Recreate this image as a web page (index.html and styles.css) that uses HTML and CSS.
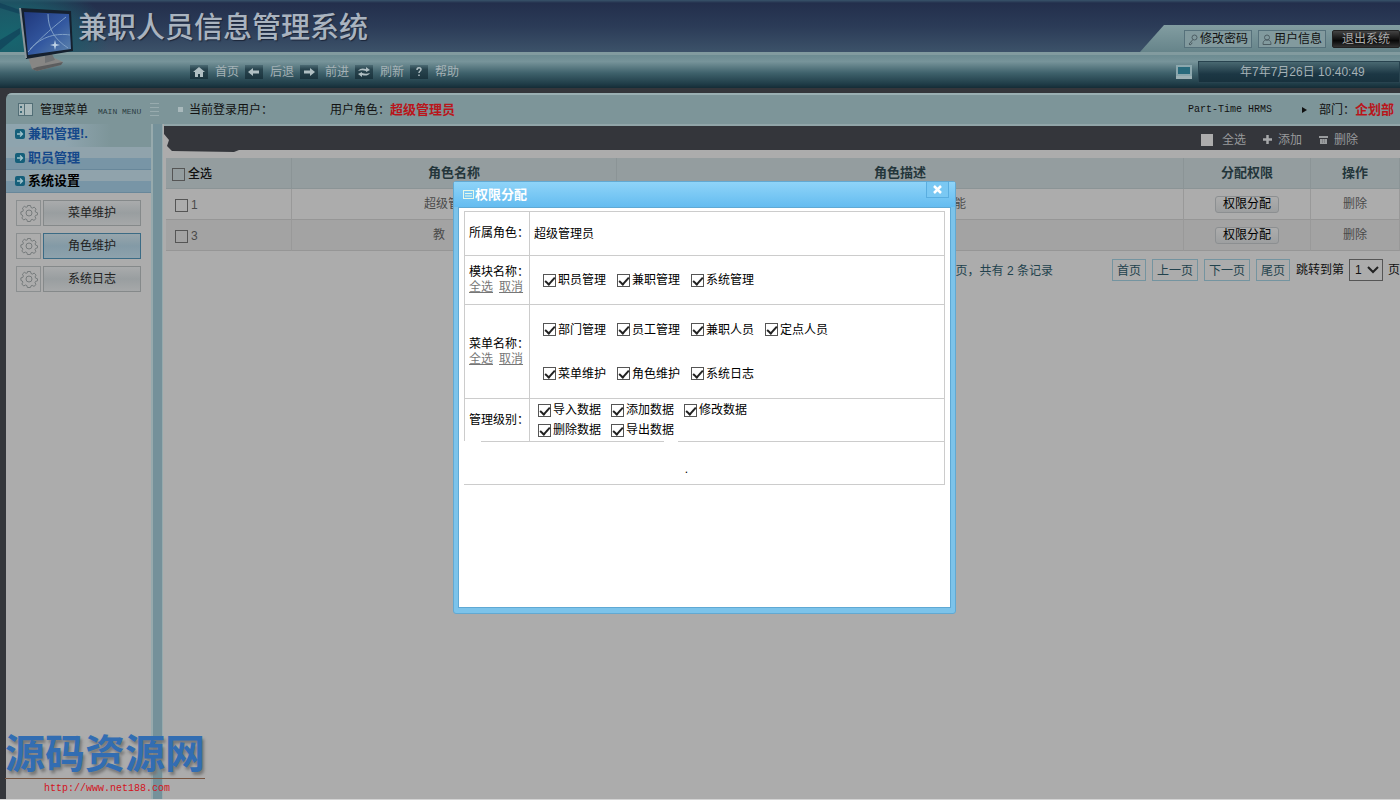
FILE: index.html
```html
<!DOCTYPE html>
<html lang="zh-CN">
<head>
<meta charset="utf-8">
<title>兼职人员信息管理系统</title>
<link rel="stylesheet" href="styles.css">
</head>
<body>
<svg class="defs" width="0" height="0" aria-hidden="true">
  <defs>
    <linearGradient id="screen" x1="0" y1="0" x2="1" y2="1"><stop offset="0" stop-color="#20387c"/><stop offset=".55" stop-color="#3358a0"/><stop offset="1" stop-color="#5f86ad"/></linearGradient>
    <linearGradient id="tile" x1="0" y1="0" x2="0" y2="1"><stop offset="0" stop-color="#4c6b74"/><stop offset=".3" stop-color="#29454f"/><stop offset="1" stop-color="#1b343e"/></linearGradient>
  </defs>
  <symbol id="gear" viewBox="0 0 18 18"><path d="M7.5 1.5h3l.5 2 1.4.6 1.8-1 1.9 2-1 1.8.5 1.2 1.9.7v2l-1.9.6-.6 1.3 1 1.8-2 1.9-1.8-1-1.2.5-.6 1.6h-3l-.5-1.9-1.4-.6-1.8 1-1.9-2 1-1.7-.5-1.3-1.4-.6V7.900l1.900-.5.600-1.400-1-1.800 1.900-1.900 1.800 1 1.300-.500z" fill="none" stroke="#767b7c"/><circle cx="9" cy="9" r="3" fill="none" stroke="#767b7c"/></symbol>
  <symbol id="bullet" viewBox="0 0 10 10"><rect width="10" height="10" rx="2" fill="#155f7a"/><path d="M2 5h5M5 2.500L7.500 5 5 7.500" fill="none" stroke="#9fc3cc" stroke-width="1.300"/></symbol>
</svg>

<header class="header">
  <div class="banner">
    <svg class="logo" width="76" height="76" viewBox="0 0 76 76" aria-hidden="true">
      <path d="M0 3l20 7v4L0 8zM0 40l20-12v6L0 50z" fill="#0f3a55" opacity=".6"/>
      <path d="M28 57l22-1 13 6-2 3-24 6-5-2z" fill="#878684"/><path d="M32 69l5 2 24-6 2-3-26 5z" fill="#5c5d5e"/>
      <path d="M45 52h6l4 8-10 3z" fill="#6f7274"/>
      <path d="M20 8l51 3 2 40-47 8z" fill="#15202e"/><path d="M19 8l2 0 6 50-2 0z" fill="#8b979d"/>
      <path d="M24 12l45 2 2 35-43 6z" fill="url(#screen)"/>
      <path d="M48 14c0 14 6 25 20 34M66 17c-9 7-25 20-38 35M30 49c12-13 27-16 40-14" fill="none" stroke="#7f9fc6" stroke-width="1"/>
      <path d="M55 40l1 4 4 1-4 1-1 4-1-4-4-1 4-1z" fill="#c0d4e6"/>
    </svg>
    <h1 class="title">兼职人员信息管理系统</h1>
    <div class="account">
      <button class="account-button"><svg width="10" height="12" viewBox="0 0 10 12"><circle cx="6.500" cy="3.500" r="2.500" fill="none" stroke="#4d5d63"/><path d="M5 5.500L1 10l1 1 1.500-1 .5-1.500" fill="none" stroke="#4d5d63"/></svg>修改密码</button>
      <button class="account-button"><svg width="10" height="12" viewBox="0 0 10 12"><circle cx="5" cy="3.500" r="2.500" fill="none" stroke="#4d5d63"/><path d="M1 10.500c0-3 1-4 2.500-4.500h3C8 6.500 9 7.500 9 10.500z" fill="none" stroke="#4d5d63"/></svg>用户信息</button>
      <button class="account-button exit">退出系统</button>
    </div>
  </div>
  <div class="toolbar">
    <nav class="nav">
      <a href="#"><svg width="18" height="14" viewBox="0 0 18 14"><rect width="18" height="14" fill="url(#tile)"/><path d="M9 2l6 5h-2v5h-3V9H8v3H5V7H3z" fill="#b0bfc3"/></svg>首页</a>
      <a href="#"><svg width="18" height="14" viewBox="0 0 18 14"><rect width="18" height="14" fill="url(#tile)"/><path d="M3 7l5-4v2.500h6v3H8V11z" fill="#b0bfc3"/></svg>后退</a>
      <a href="#"><svg width="18" height="14" viewBox="0 0 18 14"><rect width="18" height="14" fill="url(#tile)"/><path d="M15 7l-5-4v2.500H4v3h6V11z" fill="#b0bfc3"/></svg>前进</a>
      <a href="#"><svg width="18" height="14" viewBox="0 0 18 14"><rect width="18" height="14" fill="url(#tile)"/><path d="M3 6c2-3 5-3 8-2V2l4 3-4 2V6C8 5 6 5 3 6zM15 8c-2 3-5 3-8 2v2L3 9l4-2v1c3 1 5 1 8 0z" fill="#b0bfc3"/></svg>刷新</a>
      <a href="#"><svg width="18" height="14" viewBox="0 0 18 14"><rect width="18" height="14" fill="url(#tile)"/><path d="M7 5c0-3 4-3 4-.5C11 6 9 6 9 8M9 9.500v1.500" fill="none" stroke="#b0bfc3" stroke-width="1.500"/></svg>帮助</a>
    </nav>
    <div class="clock-area">
      <svg width="16" height="14" viewBox="0 0 16 14" aria-hidden="true"><rect x="1" y="1" width="14" height="9" fill="#286a7c" stroke="#8ba7ad" stroke-width="2"/><path d="M0 11h16v3H0z" fill="#9db1b5"/></svg>
      <time class="clock">年7年7月26日 10:40:49</time>
    </div>
  </div>
</header>

<div class="shell">
  <div class="infobar">
    <div class="menu-heading">
      <svg width="15" height="13" viewBox="0 0 15 13" aria-hidden="true"><rect x=".5" y=".5" width="14" height="12" fill="#a9b9bb" stroke="#526e76"/><path d="M6.500 1v11" stroke="#526e76"/><path d="M2 3h2v2H2zM2 8h2v2H2z" fill="#406b79"/></svg>
      <span>管理菜单</span><small>MAIN MENU</small>
      <i class="grip"></i>
    </div>
    <div class="info-user"><i class="dot"></i><span>当前登录用户：</span></div>
    <div class="info-role">用户角色：<strong>超级管理员</strong></div>
    <div class="info-dept"><span class="mono">Part-Time HRMS</span><i class="play"></i><span>部门：<strong>企划部</strong></span></div>
  </div>

  <div class="columns">
    <aside class="sidebar">
      <ul class="groups">
        <li class="group faded"><svg width="10" height="10"><use href="#bullet"/></svg><a href="#">兼职管理!.</a></li>
        <li class="group"><svg width="10" height="10"><use href="#bullet"/></svg><a href="#">职员管理</a></li>
        <li class="group open"><svg width="10" height="10"><use href="#bullet"/></svg><a href="#">系统设置</a></li>
      </ul>
      <div class="entries">
        <div class="entry"><span class="gear"><svg width="18" height="18"><use href="#gear"/></svg></span><button>菜单维护</button></div>
        <div class="entry"><span class="gear"><svg width="18" height="18"><use href="#gear"/></svg></span><button class="active">角色维护</button></div>
        <div class="entry"><span class="gear"><svg width="18" height="18"><use href="#gear"/></svg></span><button>系统日志</button></div>
      </div>
    </aside>
    <div class="splitter"></div>
    <main class="main">
      <div class="actions">
        <label><input type="checkbox" class="plain">全选</label>
        <a href="#"><svg width="9" height="9" viewBox="0 0 9 9"><path d="M4.500 0v9M0 4.500h9" stroke="#a6a8aa" stroke-width="2.500"/></svg>添加</a>
        <a href="#"><svg width="9" height="9" viewBox="0 0 9 9"><path d="M0 1h9v2H0zM1 4h7v5H1z" fill="#999c9e"/><path d="M3.500 4v4M5.500 4v4" stroke="#6a6c70" stroke-width=".5"/></svg>删除</a>
      </div>
      <table class="grid">
        <colgroup><col class="c-pick"><col class="c-name"><col><col class="c-grant"><col class="c-op"></colgroup>
        <thead><tr><th class="pick"><label><input type="checkbox" class="box">全选</label></th><th>角色名称</th><th>角色描述</th><th>分配权限</th><th>操作</th></tr></thead>
        <tbody>
          <tr><td class="pick"><label><input type="checkbox" class="box">1</label></td><td>超级管理员</td><td class="desc">能</td><td><button class="grant">权限分配</button></td><td><a href="#">删除</a></td></tr>
          <tr class="alt"><td class="pick"><label><input type="checkbox" class="box">3</label></td><td class="short">教</td><td></td><td><button class="grant">权限分配</button></td><td><a href="#">删除</a></td></tr>
        </tbody>
      </table>
      <div class="pager">
        <span class="total">页，共有 2 条记录</span>
        <a href="#">首页</a><a href="#">上一页</a><a href="#">下一页</a><a href="#">尾页</a>
        <label class="jump">跳转到第 <span class="select"><select><option>1</option></select><svg width="12" height="8" viewBox="0 0 12 8"><path d="M1 1l5 5 5-5" fill="none" stroke="#222" stroke-width="2"/></svg></span> 页</label>
      </div>
    </main>
  </div>
</div>

<section class="dialog" role="dialog" aria-labelledby="dialog-title">
  <header class="dialog-head">
    <svg width="11" height="9" viewBox="0 0 11 9" aria-hidden="true"><rect x=".5" y=".5" width="10" height="8" fill="none" stroke="#e6f8e8"/><path d="M2 3.500h7M2 6h7" stroke="#e6f8e8"/></svg>
    <h2 id="dialog-title">权限分配</h2>
    <button class="close" aria-label="关闭"><svg width="9" height="9" viewBox="0 0 9 9"><path d="M1 1l7 7M8 1L1 8" stroke="#fff" stroke-width="2.500"/></svg></button>
  </header>
  <div class="dialog-body">
    <table class="form">
      <tr class="r-role"><th>所属角色：</th><td>超级管理员</td></tr>
      <tr class="r-module"><th>模块名称：<div class="links"><a href="#">全选</a><a href="#">取消</a></div></th>
        <td><div class="checks">
          <label><input type="checkbox" class="box" checked>职员管理</label><label><input type="checkbox" class="box" checked>兼职管理</label><label><input type="checkbox" class="box" checked>系统管理</label></div></td></tr>
      <tr class="r-menu"><th>菜单名称：<div class="links"><a href="#">全选</a><a href="#">取消</a></div></th>
        <td><div class="checks">
          <label><input type="checkbox" class="box" checked>部门管理</label><label><input type="checkbox" class="box" checked>员工管理</label><label><input type="checkbox" class="box" checked>兼职人员</label><label><input type="checkbox" class="box" checked>定点人员</label></div>
          <div class="checks">
          <label><input type="checkbox" class="box" checked>菜单维护</label><label><input type="checkbox" class="box" checked>角色维护</label><label><input type="checkbox" class="box" checked>系统日志</label></div></td></tr>
      <tr class="r-level"><th>管理级别：</th>
        <td><div class="checks">
          <label><input type="checkbox" class="box" checked>导入数据</label><label><input type="checkbox" class="box" checked>添加数据</label><label><input type="checkbox" class="box" checked>修改数据</label></div>
          <div class="checks">
          <label><input type="checkbox" class="box" checked>删除数据</label><label><input type="checkbox" class="box" checked>导出数据</label></div></td></tr>
      <tr class="r-last"><td colspan="2">.</td></tr>
    </table>
  </div>
</section>

<div class="watermark"><div class="mark-name">源码资源网</div><div class="mark-url">http://www.net188.com</div></div>
</body>
</html>
```
FILE: styles.css
```css
* { box-sizing: border-box; }
body {
  margin: 0;
  min-height: 100vh;
  display: flex;
  flex-direction: column;
  position: relative;
  background: #34363b;
  border-bottom: 1px solid #d4d4d4;
  font: 12px/16px "Liberation Sans", "Noto Sans CJK SC", sans-serif;
  color: #111;
  overflow: hidden;
}
a { color: inherit; text-decoration: none; }
button, input, select { font: inherit; color: inherit; margin: 0; }
svg { flex: none; }
h1, h2, ul { margin: 0; padding: 0; }
.defs { position: absolute; }
.mono, .mark-url { font-family: "Liberation Mono", "Noto Sans CJK SC", monospace; font-size: 10px; }

/* header */
.banner {
  display: flex;
  height: 52px;
  background:
    radial-gradient(ellipse 100px 60px at 10px 38px, #17656f 0%, #1c5967 50%, transparent 100%),
    linear-gradient(#38536a 0, #232f4c 3px, #2b3b57 50%, #3c5269 100%);
}
.logo { margin-right: 2px; z-index: 1; }
.title { font-size: 29px; line-height: 56px; font-weight: 500; color: #a9b3bf; text-shadow: 1px 1px 1px #1b2538; }
.account {
  margin: 25px 0 0 auto;
  padding: 5px 0 0 44px;
  display: flex;
  gap: 6px;
  align-items: flex-start;
  background: linear-gradient(#829da1, #66848a);
  clip-path: polygon(24px 0, 100% 0, 100% 100%, 0 100%);
}
.account-button {
  width: 68px;
  height: 18px;
  padding: 1px 2px 0;
  display: flex;
  align-items: center;
  justify-content: center;
  gap: 2px;
  border: 1px solid #56717b;
  background: #829a9e;
  line-height: 15px;
  white-space: nowrap;
}
.exit { background: linear-gradient(#444, #080808 60%, #333); border-color: #222; border-radius: 2px; color: #aaa; }
.toolbar {
  display: flex;
  justify-content: space-between;
  height: 36px;
  border-top: 3px solid #829b9f;
  background: linear-gradient(#6c8b91 0, #77949a 20%, #3e616b 55%, #1f3c47 88%, #152c36 100%);
}
.nav { display: flex; gap: 6px; margin-left: 190px; align-items: center; color: #a5b2b6; }
.nav a { display: flex; gap: 7px; align-items: center; }
.clock-area { display: flex; align-items: center; gap: 6px; }
.clock {
  width: 202px;
  height: 22px;
  padding-left: 41px;
  border: 1px solid #28434f;
  background: linear-gradient(#496871, #1c3744 60%, #18313d);
  color: #a4b1b6;
  line-height: 20px;
  white-space: nowrap;
}

/* information strip */
.shell { flex: 1; display: flex; flex-direction: column; margin: 5px 0 0 6px; border-radius: 6px 0 0 0; background: #7d9599; overflow: hidden; }
.infobar { display: flex; align-items: center; height: 31px; border-top: 2px solid #9aafb2; }
.menu-heading { display: flex; align-items: center; width: 172px; padding-left: 12px; gap: 7px; }
.menu-heading small { font: 8px/12px "Liberation Mono", monospace; color: #2b3c42; padding: 5px 2px 0 3px; white-space: nowrap; }
.grip { width: 9px; height: 14px; background: repeating-linear-gradient(#98abae 0 1px, transparent 1px 4px); }
.info-user { display: flex; align-items: center; gap: 6px; width: 152px; }
.dot { width: 5px; height: 5px; background: #a9b9bc; }
.infobar strong { color: #b9151b; font-size: 13px; }
.info-dept { margin-left: auto; display: flex; align-items: center; padding-right: 6px; }
.play { margin: 0 12px 0 30px; border: 3px solid transparent; border-left: 5px solid #111; border-right: 0; }

/* sidebar */
.columns { flex: 1; display: flex; }
.sidebar { width: 145px; background: #acacac; }
.groups { list-style: none; }
.group {
  display: flex;
  align-items: center;
  gap: 3px;
  height: 23px;
  padding-left: 9px;
  border-bottom: 1px solid #68879a;
  background: linear-gradient(#90a3ac 0 48%, #7895a6 52% 100%);
  color: #15488a;
  font-size: 13px;
  font-weight: bold;
}
.group.faded { border-bottom: 0; padding-bottom: 3px; background: linear-gradient(to right, #8ea4ae 0, #8ea4ae 60px, #7d9599 105px); }
.group.open { color: #000; }
.entries { display: flex; flex-direction: column; gap: 7px; padding: 7px 10px; }
.entry { display: flex; gap: 2px; height: 26px; }
.gear { width: 25px; display: grid; place-items: center; border: 1px solid #8b8f90; }
.entry button { flex: 1; padding: 0; border: 1px solid #85898a; background: linear-gradient(#a9abac, #999ea0 50%, #a6a8a9); color: #222; }
.entry .active { border-color: #3b6b85; background: linear-gradient(#97a5ac, #839aa6 50%, #8ea2ac); }
.splitter { width: 12px; border: 1px solid #97aaad; border-width: 0 1px 0 2px; background: #75919a; }

/* main area */
.main { flex: 1; min-width: 0; background: #acacac; padding-left: 3px; }
.actions {
  display: flex;
  justify-content: flex-end;
  align-items: center;
  gap: 17px;
  height: 28px;
  margin-left: -2px;
  padding: 1px 42px 0 0;
  background: #34363b;
  color: #989a9c;
  border-top: 2px solid #91a5a8;
  clip-path: polygon(0 0, 100% 0, 100% 26px, 75px 26px, 70px 28px, 8px 27px, 3px 22px, 5px 16px, 0 10px);
}
.actions label, .actions a { display: flex; align-items: center; gap: 6px; }
.plain { appearance: none; width: 12px; height: 12px; background: #acacac; margin-right: 3px; }
.grid { width: 100%; margin-top: 6px; border-spacing: 0; table-layout: fixed; }
.c-pick { width: 126px; }
.c-name { width: 325px; }
.c-grant { width: 127px; }
.c-op { width: 89px; }
.grid th, .grid td { height: 31px; padding: 0; text-align: center; border-right: 1px solid #999; border-bottom: 1px solid #969696; }
.grid th { background: #949d9f; border-color: #8b9496; font-size: 13px; color: #24363b; }
.grid td { color: #4a4a4a; }
.grid .alt td { background: #a3a3a3; }
.grid .pick { text-align: left; padding: 2px 0 0 9px; }
.grid th.pick { font-size: 12px; font-weight: 500; color: #111; padding-left: 6px; }
.pick label { display: flex; align-items: center; gap: 3px; }
.grid .desc { padding-left: 120px; }
.grid .short { padding-right: 30px; }
.grant { height: 17px; width: 64px; padding: 0; border: 1px solid #8c8f91; border-radius: 3px; background: linear-gradient(#adadad, #9d9fa0); color: #000; line-height: 14px; vertical-align: middle; }
.box { appearance: none; flex: none; width: 13px; height: 13px; border: 1px solid #555; display: grid; place-items: center; }
.box:checked::after { content: ""; width: 4px; height: 8px; margin-bottom: 2px; border: solid #222; border-width: 0 2px 2px 0; transform: rotate(42deg); }
.pager { display: flex; justify-content: flex-end; align-items: center; gap: 6px; padding-top: 8px; color: #22424d; }
.pager a { height: 22px; padding: 0 4px; border: 1px solid #7494a0; line-height: 22px; }
.total { margin-right: 53px; padding-top: 2px; }
.jump { display: flex; align-items: center; gap: 5px; color: #111; }
.select { display: grid; align-items: center; width: 34px; height: 22px; border: 1px solid #555; }
.select select, .select svg { grid-area: 1 / 1; }
.select select { appearance: none; width: 100%; height: 20px; padding: 0 5px; border: 0; background: none; }
.select svg { justify-self: end; margin-right: 3px; pointer-events: none; }

/* dialog */
.dialog {
  position: absolute;
  left: 453px;
  top: 181px;
  width: 503px;
  height: 433px;
  display: flex;
  flex-direction: column;
  padding: 0 5px 5px;
  border: 1px solid #62a9d2;
  border-radius: 3px;
  background: #7cc3ea;
}
.dialog-head { display: flex; align-items: center; gap: 1px; height: 25px; margin: 0 -5px; padding: 0 6px 0 9px; background: linear-gradient(#8fd4f8, #64bcf0); color: #fff; }
.dialog-head h2 { font-size: 13px; line-height: 16px; }
.close { display: grid; place-items: center; align-self: flex-start; width: 23px; height: 16px; margin-left: auto; padding: 0; border: 1px solid #5aaee0; border-top: 0; background: #7ac8f3; }
.dialog-body { flex: 1; padding: 3px 5px; background: #fff; border: 1px solid #5fa9d4; margin: 0 -1px; }
.form { width: 100%; border-spacing: 0; border-top: 1px solid #ccc; border-right: 1px solid #ccc; }
.form th, .form td { padding: 0 4px; border-left: 1px solid #ccc; border-bottom: 1px solid #ccc; text-align: left; font-weight: normal; color: #000; }
.form th { width: 65px; padding-right: 0; line-height: 15px; white-space: nowrap; }
.links { display: flex; gap: 6px; color: #777; }
.links a { text-decoration: underline; }
.checks { display: flex; gap: 11px; }
.checks label { display: flex; align-items: center; gap: 2px; }
.r-role { height: 44px; }
.r-module { height: 49px; }
.r-menu { height: 94px; }
.r-level { height: 42px; }
.form .r-module td, .form .r-menu td { padding-left: 13px; }
.r-menu .checks + .checks { margin-top: 28px; }
.form .r-level td { padding-left: 8px; }
.r-level .checks { gap: 10px; line-height: 20px; }
.form .r-level th, .form .r-level td { border-bottom: 0; }
.form .r-last td {
  height: 44px;
  border-left: 0;
  padding: 12px 35px 0 0;
  text-align: center;
  background: linear-gradient(to right, transparent 17px, #ccc 17px 200px, transparent 200px 214px, #ccc 214px) top / 100% 1px no-repeat;
}

/* site mark */
.watermark { position: absolute; left: 5px; bottom: 3px; width: 200px; }
.mark-name { border-bottom: 1px solid #765440; font-size: 40px; line-height: 48px; font-weight: bold; color: #326db2; text-shadow: 2px 3px 3px #777; white-space: nowrap; }
.mark-url { padding: 2px 0 0 39px; color: #d3131c; line-height: 15px; }
```
